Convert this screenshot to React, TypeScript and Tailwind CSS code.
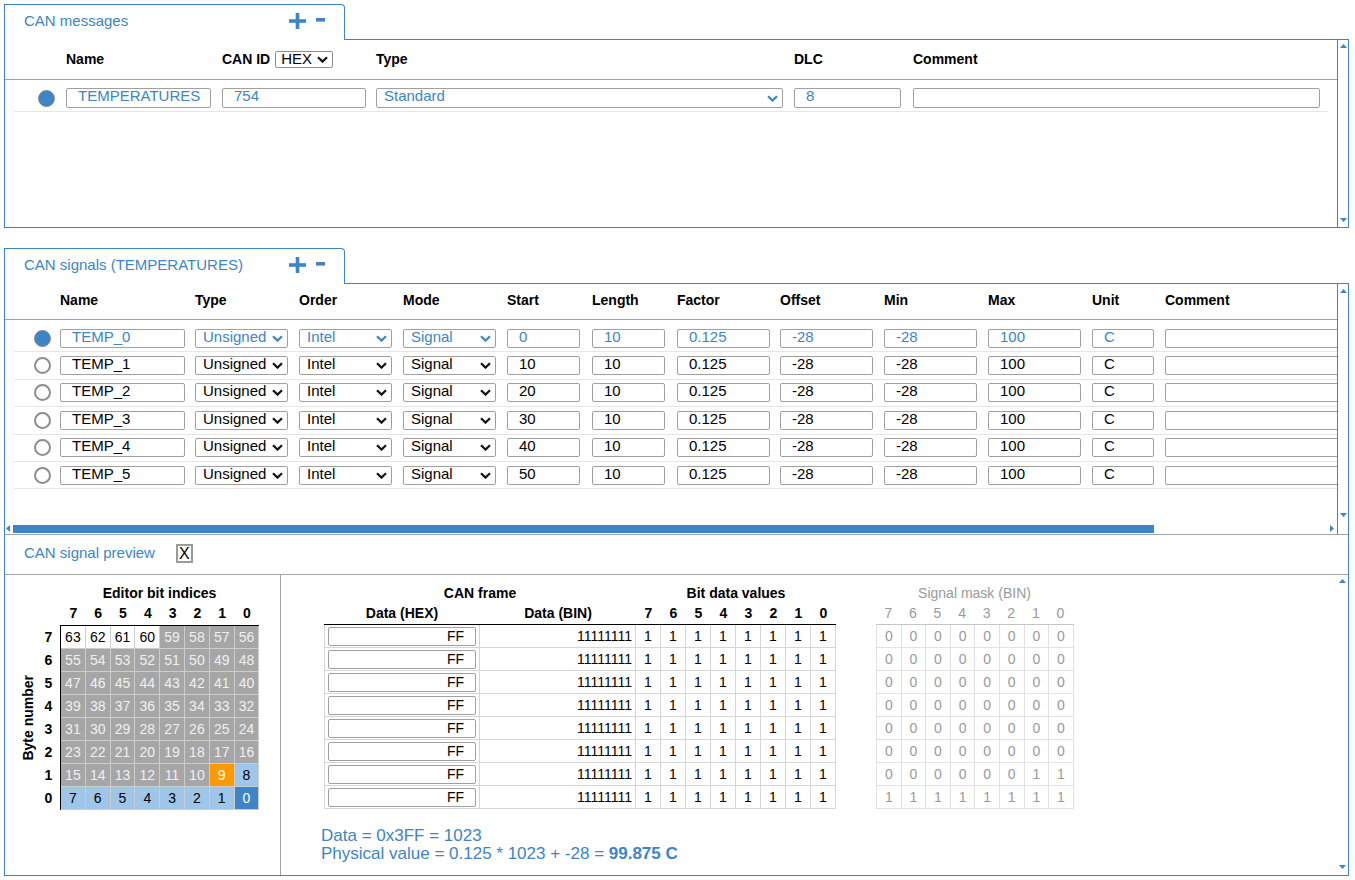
import React from "react"

const signals = [0, 1, 2, 3, 4, 5]
const bitCols = [7, 6, 5, 4, 3, 2, 1, 0]
const maskRows = [
  [0, 0, 0, 0, 0, 0, 0, 0],
  [0, 0, 0, 0, 0, 0, 0, 0],
  [0, 0, 0, 0, 0, 0, 0, 0],
  [0, 0, 0, 0, 0, 0, 0, 0],
  [0, 0, 0, 0, 0, 0, 0, 0],
  [0, 0, 0, 0, 0, 0, 0, 0],
  [0, 0, 0, 0, 0, 0, 1, 1],
  [1, 1, 1, 1, 1, 1, 1, 1],
]

function Chevron({ blue = false }: { blue?: boolean }) {
  return (
    <svg width="11" height="7" viewBox="0 0 11 7" className="shrink-0">
      <polyline points="1,1.2 5.5,5.6 10,1.2" fill="none" stroke={blue ? "#3d85c6" : "#111"} strokeWidth="2.2" />
    </svg>
  )
}

function Radio({ on = false }: { on?: boolean }) {
  if (on) return <div className="h-[17px] w-[17px] shrink-0 rounded-full border-[1.5px] border-[#8a8a8a] bg-[#3d85c6]" />
  return <div className="h-[17px] w-[17px] shrink-0 rounded-full border-2 border-[#8e8e8e] bg-white" />
}

function Field({ value = "", width, blue = false, tall = false }: { value?: string; width: string; blue?: boolean; tall?: boolean }) {
  return (
    <div
      className={`${width} ${tall ? "h-[20px] leading-[14px]" : "h-[19px] leading-[13px]"} ${blue ? "text-[#3d85c6]" : "text-black"} shrink-0 overflow-hidden whitespace-nowrap rounded-[2px] border border-[#a0a0a0] bg-white pl-[11px] text-[15px]`}
    >
      {value}
    </div>
  )
}

function Select({ value, width, blue = false, tall = false }: { value: string; width: string; blue?: boolean; tall?: boolean }) {
  return (
    <div
      className={`${width} ${tall ? "h-[20px] leading-[14px]" : "h-[19px] leading-[13px]"} ${blue ? "text-[#3d85c6]" : "text-black"} flex shrink-0 items-start justify-between rounded-[2px] border border-[#a0a0a0] bg-white pl-[7px] pr-[4px] text-[15px]`}
    >
      <span className="whitespace-nowrap">{value}</span>
      <span className="self-center">
        <Chevron blue={blue} />
      </span>
    </div>
  )
}

function Tab({ title }: { title: string }) {
  return (
    <div className="flex h-[36px]">
      <div className="flex w-[341px] shrink-0 items-center rounded-tr-[4px] border-l border-r border-t border-[#3d85c6] pb-[3px] pl-[19px]">
        <span className="text-[15px] text-[#3d85c6]">{title}</span>
        <span className="ml-auto mr-[19px] flex items-center gap-[10px]">
          <svg width="17" height="16" viewBox="0 0 17 16">
            <rect x="0" y="6.2" width="17" height="3.6" fill="#3d85c6" />
            <rect x="6.7" y="0" width="3.6" height="16" fill="#3d85c6" />
          </svg>
          <svg width="9" height="4" viewBox="0 0 9 4" className="-mt-[2px]">
            <rect x="0" y="0" width="9" height="3.6" fill="#3d85c6" />
          </svg>
        </span>
      </div>
      <div className="flex-1 border-b border-[#3d85c6]" />
    </div>
  )
}

function Arrow({ dir }: { dir: "up" | "down" | "left" | "right" }) {
  const pts = {
    up: "0,4 3.5,0 7,4",
    down: "0,0 3.5,4 7,0",
    left: "4,0 0,3.5 4,7",
    right: "0,0 4,3.5 0,7",
  }[dir]
  const vertical = dir === "up" || dir === "down"
  return (
    <svg width={vertical ? 7 : 4} height={vertical ? 4 : 7} className="shrink-0">
      <polygon points={pts} fill="#3d85c6" />
    </svg>
  )
}

function VScroll({ top, bottom, line = true }: { top: string; bottom: string; line?: boolean }) {
  return (
    <div className={`${top} ${bottom} ${line ? "border-l border-[#3d85c6]" : ""} flex w-[11px] shrink-0 flex-col items-center justify-between`}>
      <Arrow dir="up" />
      <Arrow dir="down" />
    </div>
  )
}

function cellClass(bit: number) {
  if (bit === 9) return "bg-[#ff9900] text-white"
  if (bit === 0) return "bg-[#3d85c6] text-white"
  if (bit < 9) return "bg-[#9fc5e8] text-black"
  if (bit >= 60) return "bg-white text-black"
  return "bg-[#a6a6a6] text-[#f0f0f0]"
}

function BitGrid() {
  return (
    <div className="w-[276px] shrink-0 border-r border-[#a3a3a3] pl-[14px] pt-[10px]">
      <div className="ml-[41px] w-[199px] text-center text-[14px] font-bold leading-[17px]">Editor bit indices</div>
      <div className="ml-[42px] flex h-[23px] items-center text-[14px] font-bold">
        {bitCols.map((d) => (
          <div key={d} className="w-[24.8px] text-center">
            {d}
          </div>
        ))}
      </div>
      <div className="flex">
        <div className="flex w-[18px] items-center justify-center">
          <span className="rotate-180 whitespace-nowrap text-[14px] font-bold [writing-mode:vertical-rl]">Byte number</span>
        </div>
        <div className="w-[23px] pt-[1px]">
          {bitCols.map((r) => (
            <div key={r} className="flex h-[23px] items-center justify-center text-[14px] font-bold">
              {r}
            </div>
          ))}
        </div>
        <div className="border-l border-t border-black">
          {bitCols.map((r) => (
            <div key={r} className="flex">
              {bitCols.map((c) => {
                const bit = r * 8 + c
                return (
                  <div
                    key={c}
                    className={`${cellClass(bit)} flex h-[23px] w-[24.8px] items-center justify-center border-b border-r border-[#cdcdcd] text-[14px]`}
                  >
                    {bit}
                  </div>
                )
              })}
            </div>
          ))}
        </div>
      </div>
    </div>
  )
}

function FrameTable() {
  return (
    <div className="flex flex-col">
      <div className="flex h-[17px] items-center text-[14px] font-bold">
        <div className="w-[312px] text-center">CAN frame</div>
        <div className="w-[200px] text-center">Bit data values</div>
      </div>
      <div className="flex h-[23px] items-center border-b border-black text-[14px] font-bold">
        <div className="w-[156px] text-center">Data (HEX)</div>
        <div className="w-[156px] text-center">Data (BIN)</div>
        {bitCols.map((d) => (
          <div key={d} className="w-[25px] text-center">
            {d}
          </div>
        ))}
      </div>
      {bitCols.map((r) => (
        <div key={r} className="flex h-[23px] border-b border-[#d6d6d6] text-[14px]">
          <div className="flex w-[156px] items-center border-l border-r border-[#d6d6d6] px-[3px]">
            <div className="h-[19px] w-[150px] rounded-[2px] border border-[#a0a0a0] pr-[11px] text-right leading-[17px]">FF</div>
          </div>
          <div className="flex w-[156px] items-center justify-end border-r border-[#d6d6d6] pr-[3px]">11111111</div>
          {bitCols.map((d) => (
            <div key={d} className="flex w-[25px] items-center justify-center border-r border-[#d6d6d6]">
              1
            </div>
          ))}
        </div>
      ))}
    </div>
  )
}

function MaskTable() {
  return (
    <div className="ml-[40px] flex flex-col text-[#9a9a9a]">
      <div className="h-[17px] w-[197px] text-center text-[14px] leading-[17px]">Signal mask (BIN)</div>
      <div className="flex h-[23px] items-center border-b border-[#c4c4c4] text-[14px]">
        {bitCols.map((d) => (
          <div key={d} className="w-[24.6px] text-center">
            {d}
          </div>
        ))}
      </div>
      {maskRows.map((row, i) => (
        <div key={i} className="flex h-[23px] border-b border-l border-[#e2e2e2] text-[14px]">
          {row.map((v, j) => (
            <div key={j} className="flex w-[24.6px] items-center justify-center border-r border-[#e2e2e2]">
              {v}
            </div>
          ))}
        </div>
      ))}
    </div>
  )
}

export default function App() {
  return (
    <div className="h-[880px] w-[1355px] overflow-hidden bg-white pl-[4px] pr-[6px] pt-[4px] font-['Liberation_Sans',Arial,sans-serif] text-black">
      {/* CAN messages */}
      <Tab title="CAN messages" />
      <div className="flex h-[188px] border-b border-l border-r border-[#3d85c6]">
        <div className="flex-1 overflow-hidden">
          <div className="flex h-[40px] items-center border-b border-[#a3a3a3] text-[14px] font-bold">
            <div className="w-[61px] shrink-0" />
            <div className="w-[156px] shrink-0">Name</div>
            <div className="flex w-[154px] shrink-0 items-center">
              <span>CAN ID</span>
              <div className="ml-[5px] flex h-[17px] w-[58px] items-center justify-between rounded-[2px] border border-[#8f8f8f] pl-[5px] pr-[4px] text-[15px] font-normal">
                <span>HEX</span>
                <Chevron />
              </div>
            </div>
            <div className="w-[418px] shrink-0">Type</div>
            <div className="w-[119px] shrink-0">DLC</div>
            <div>Comment</div>
          </div>
          <div className="mx-[9px] flex items-center border-b border-[#e6e6e6] pb-[3px] pt-[8px]">
            <div className="w-[52px] shrink-0 pl-[24px]">
              <Radio on />
            </div>
            <div className="w-[156px] shrink-0">
              <Field value="TEMPERATURES" width="w-[145px]" blue tall />
            </div>
            <div className="w-[154px] shrink-0">
              <Field value="754" width="w-[144px]" blue tall />
            </div>
            <div className="w-[418px] shrink-0">
              <Select value="Standard" width="w-[407px]" blue tall />
            </div>
            <div className="w-[119px] shrink-0">
              <Field value="8" width="w-[107px]" blue tall />
            </div>
            <Field width="w-[407px]" tall />
          </div>
        </div>
        <VScroll top="pt-[4px]" bottom="pb-[5px]" />
      </div>

      {/* CAN signals */}
      <div className="mt-[20px]">
        <Tab title="CAN signals (TEMPERATURES)" />
        <div className="border-b border-l border-r border-[#3d85c6]">
          <div className="flex h-[251px] border-b border-[#a3a3a3]">
            <div className="flex min-w-0 flex-1 flex-col">
              <div className="flex-1 overflow-hidden">
                <div className="flex h-[36px] items-center border-b border-[#a3a3a3] pb-[3px] text-[14px] font-bold">
                  <div className="w-[55px] shrink-0" />
                  <div className="w-[135px] shrink-0">Name</div>
                  <div className="w-[104px] shrink-0">Type</div>
                  <div className="w-[104px] shrink-0">Order</div>
                  <div className="w-[104px] shrink-0">Mode</div>
                  <div className="w-[85px] shrink-0">Start</div>
                  <div className="w-[85px] shrink-0">Length</div>
                  <div className="w-[103px] shrink-0">Factor</div>
                  <div className="w-[104px] shrink-0">Offset</div>
                  <div className="w-[104px] shrink-0">Min</div>
                  <div className="w-[104px] shrink-0">Max</div>
                  <div className="w-[73px] shrink-0">Unit</div>
                  <div className="shrink-0">Comment</div>
                </div>
                <div className="pt-[5px]">
                  {signals.map((i) => {
                    const on = i === 0
                    return (
                      <div key={i} className="ml-[9px] flex h-[27.4px] items-center border-b border-[#e6e6e6]">
                        <div className="w-[46px] shrink-0 pl-[20px]">
                          <Radio on={on} />
                        </div>
                        <div className="w-[135px] shrink-0">
                          <Field value={`TEMP_${i}`} width="w-[125px]" blue={on} />
                        </div>
                        <div className="w-[104px] shrink-0">
                          <Select value="Unsigned" width="w-[93px]" blue={on} />
                        </div>
                        <div className="w-[104px] shrink-0">
                          <Select value="Intel" width="w-[93px]" blue={on} />
                        </div>
                        <div className="w-[104px] shrink-0">
                          <Select value="Signal" width="w-[93px]" blue={on} />
                        </div>
                        <div className="w-[85px] shrink-0">
                          <Field value={String(i * 10)} width="w-[73px]" blue={on} />
                        </div>
                        <div className="w-[85px] shrink-0">
                          <Field value="10" width="w-[73px]" blue={on} />
                        </div>
                        <div className="w-[103px] shrink-0">
                          <Field value="0.125" width="w-[93px]" blue={on} />
                        </div>
                        <div className="w-[104px] shrink-0">
                          <Field value="-28" width="w-[93px]" blue={on} />
                        </div>
                        <div className="w-[104px] shrink-0">
                          <Field value="-28" width="w-[93px]" blue={on} />
                        </div>
                        <div className="w-[104px] shrink-0">
                          <Field value="100" width="w-[93px]" blue={on} />
                        </div>
                        <div className="w-[73px] shrink-0">
                          <Field value="C" width="w-[62px]" blue={on} />
                        </div>
                        <Field width="w-[300px]" />
                      </div>
                    )
                  })}
                </div>
              </div>
              <div className="flex h-[11px] items-center">
                <div className="ml-[1px]">
                  <Arrow dir="left" />
                </div>
                <div className="ml-[3px] h-[8px] w-[1141px] bg-[#3d85c6]" />
                <div className="flex-1" />
                <div className="mr-[3px]">
                  <Arrow dir="right" />
                </div>
              </div>
            </div>
            <VScroll top="pt-[5px]" bottom="pb-[17px]" />
          </div>

          {/* preview header */}
          <div className="flex h-[40px] items-center border-b border-[#a3a3a3] pb-[2px] pl-[19px]">
            <span className="text-[15px] text-[#3d85c6]">CAN signal preview</span>
            <div className="ml-[21px] flex h-[19px] w-[17px] items-center justify-center border-2 border-[#9a9a9a] text-[16px] leading-none">X</div>
          </div>

          {/* preview body */}
          <div className="flex h-[300px]">
            <BitGrid />
            <div className="flex-1 pl-[40px] pt-[10px]">
              <div className="ml-[3px] flex items-start">
                <FrameTable />
                <MaskTable />
              </div>
              <div className="mt-[18px] text-[17px] leading-[17.5px] text-[#3d85c6]">
                <div>Data = 0x3FF = 1023</div>
                <div>
                  Physical value = 0.125 * 1023 + -28 = <span className="font-bold">99.875 C</span>
                </div>
              </div>
            </div>
            <VScroll top="pt-[4px]" bottom="pb-[6px]" line={false} />
          </div>
        </div>
      </div>
    </div>
  )
}
